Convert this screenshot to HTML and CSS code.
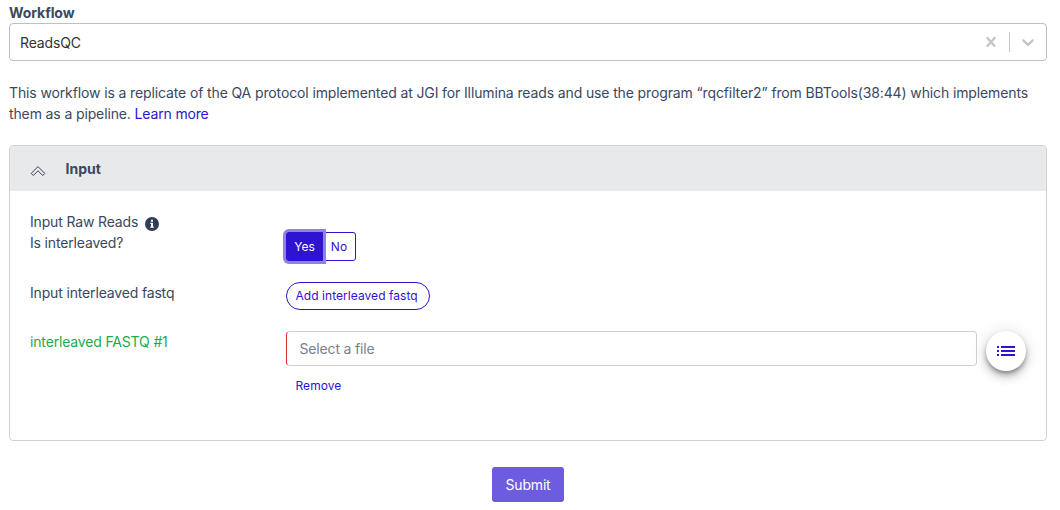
FILE: index.html
```html
<!DOCTYPE html>
<html lang="en">
<head>
<meta charset="utf-8">
<title>Workflow</title>
<link rel="stylesheet" href="styles.css">
</head>
<body>
<main class="page">
  <div class="label">Workflow</div>
  <div class="select">
    <span class="value">ReadsQC</span>
    <svg class="clear" width="20" height="20" viewBox="0 0 20 20"><path d="M14.348 14.849c-0.469 0.469-1.229 0.469-1.697 0l-2.651-3.030-2.651 3.029c-0.469 0.469-1.229 0.469-1.697 0-0.469-0.469-0.469-1.229 0-1.697l2.758-3.15-2.759-3.152c-0.469-0.469-0.469-1.228 0-1.697s1.228-0.469 1.697 0l2.652 3.031 2.651-3.031c0.469-0.469 1.228-0.469 1.697 0s0.469 1.229 0 1.697l-2.758 3.152 2.758 3.15c0.469 0.469 0.469 1.229 0 1.698z"/></svg>
    <span class="separator"></span>
    <svg class="chevron" width="20" height="20" viewBox="0 0 20 20"><path d="M4.516 7.548c0.436-0.446 1.043-0.481 1.576 0l3.908 3.747 3.908-3.747c0.533-0.481 1.141-0.446 1.574 0 0.436 0.445 0.408 1.197 0 1.615-0.406 0.418-4.695 4.502-4.695 4.502-0.217 0.223-0.502 0.335-0.787 0.335s-0.57-0.112-0.789-0.335c0 0-4.287-4.084-4.695-4.502s-0.436-1.17 0-1.615z"/></svg>
  </div>
  <p class="description">This workflow is a replicate of the QA protocol implemented at JGI for Illumina reads and use the program “rqcfilter2” from BBTools(38:44) which implements them as a pipeline. <a href="#">Learn more</a></p>
  <section class="card">
    <header class="card-header">
      <svg width="16" height="12" viewBox="0 0 16 12"><path d="M1.2 8.4 8 1.6l6.8 6.8-2.1 2.1L8 5.8l-4.7 4.7z"/></svg>
      <span>Input</span>
    </header>
    <div class="card-body">
      <div class="row interleaved">
        <div class="name">Input Raw Reads
          <svg class="info" width="14" height="14" viewBox="0 0 14 14"><circle cx="7" cy="7" r="7"/><path d="M6 2.7h2v2H6zM5.3 5.8H8v3.7h.8v1.2H5.3V9.5h.8V7h-.8z"/></svg>
          <br>Is interleaved?</div>
        <div class="toggle"><button class="yes">Yes</button><button class="no">No</button></div>
      </div>
      <div class="row fastq">
        <div class="name">Input interleaved fastq</div>
        <button class="add">Add interleaved fastq</button>
      </div>
      <div class="row file-row">
        <div class="name required">interleaved FASTQ #1</div>
        <div class="file">Select a file</div>
        <button class="browse" aria-label="Browse"><svg width="18" height="12" viewBox="0 0 18 12"><path d="M0 1h2v2H0zM4 1h14v2H4zM0 5h2v2H0zM4 5h14v2H4zM0 9h2v2H0zM4 9h14v2H4z"/></svg></button>
      </div>
      <button class="remove">Remove</button>
    </div>
  </section>
  <button class="submit">Submit</button>
</main>
</body>
</html>
```
FILE: styles.css
```css
* { box-sizing: border-box; }
body { margin: 0; background: #fff; color: #3a4861; font: 14px/21px Inter, sans-serif; letter-spacing: -0.16px; }
button { font-family: inherit; margin: 0; padding: 0; letter-spacing: 0.05px; }
.page { padding: 3px 13px 0 9px; display: flex; flex-direction: column; }
.label { font-weight: 700; line-height: 20px; letter-spacing: -0.08px; }
.select { height: 38px; border: 1px solid #bfbfbf; border-radius: 4px; display: flex; align-items: center; padding: 0 8px 0 10px; color: #333; }
.value { flex: 1; padding-top: 1px; }
.select svg { fill: #c4c4c4; }
.clear { margin-right: 8px; }
.separator { width: 1px; height: 20px; background: #c4c4c4; margin-right: 8px; }
.description { margin: 21px 0; letter-spacing: -0.125px; }
.description a { color: #2e13d1; text-decoration: none; letter-spacing: -0.16px; }
.card { height: 296px; border: 1px solid #d0d3d6; border-radius: 4px; overflow: hidden; }
.card-header { height: 45px; background: #e7e9eb; display: flex; align-items: center; padding: 0 20px; gap: 19.5px; font-weight: 700; letter-spacing: 0; }
.card-header svg { fill: none; stroke: #35435c; margin-top: 4px; }
.card-body { padding: 20px 20px 0; }
.row { display: flex; align-items: flex-start; }
.name { width: 256px; flex: none; }
.info { margin-left: 3px; vertical-align: -4px; fill: #2f3d55; }
.info path { fill: #fff; }
.interleaved { height: 71px; }
.toggle { display: flex; margin-top: 21px; }
.toggle button { height: 29px; border: 1px solid #2e13d1; font-size: 12px; color: #2e13d1; background: #fff; }
.toggle .yes { width: 37px; color: #fff; background: #2e13d1; border-radius: 3px 0 0 3px; box-shadow: 0 0 0 3px #8d82e6; z-index: 1; }
.toggle .no { width: 34px; margin-left: -1px; border-radius: 0 3px 3px 0; }
.fastq { height: 49px; }
.add { width: 144px; height: 28px; border: 1px solid #2e13d1; border-radius: 14px; background: #fff; color: #2e13d1; font-size: 12px; text-align: left; padding: 0 0 1px 8.5px; }
.required { color: #1bab4b; }
.file { width: 691px; height: 35px; border: 1px solid #ced2d8; border-left-color: #e03131; border-radius: 4px; padding: 6px 12.5px; color: #768192; }
.browse { width: 40px; height: 40px; margin-left: 9px; border: 0; border-radius: 50%; background: #fff; box-shadow: 0 3px 5px -1px #0006, 0 6px 10px #00000030, 0 1px 18px #0000001f; display: grid; place-items: center; }
.browse svg { fill: #2e13d1; }
.remove { border: 0; background: none; color: #2e13d1; font-size: 12px; margin: 7px 0 0 265.5px; }
.submit { width: 72px; height: 35px; margin: 26px auto 0; align-self: center; border: 0; border-radius: 3px; background: #6d5ce0; color: #fff; font-size: 14px; letter-spacing: -0.16px; }
```
